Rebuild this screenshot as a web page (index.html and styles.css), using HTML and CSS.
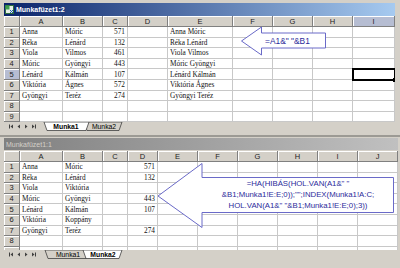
FILE: index.html
```html
<!DOCTYPE html>
<html lang="hu">
<head>
  <meta charset="UTF-8" />
  <title>Munkafüzet</title>
  <link rel="stylesheet" href="styles.css">
</head>
<body>
  <div class="desk">
    <div class="win win1">
      <div class="title active">
        <svg class="xl" width="9" height="9" viewBox="0 0 9 9">
          <rect x="0.5" y="0.5" width="8" height="8" fill="#e8f0e8" stroke="#2f6f3f"/>
          <rect x="0.5" y="0.5" width="4" height="4" fill="#3f9f4f"/>
          <path d="M5 5 L8 8 M8 5 L5 8" stroke="#1f5faf" stroke-width="1"/>
        </svg>
        <span>Munkafüzet1:2</span>
      </div>
      <div class="sheet s1" id="sheet1"></div>
      <div class="tabbar">
        <svg width="396" height="9" viewBox="0 0 396 9">
          <g class="nav">
            <rect x="5" y="2.5" width="1" height="4"/><path d="M9 2.5 L6.5 4.5 L9 6.5Z"/>
            <path d="M16 2.5 L13.5 4.5 L16 6.5Z"/>
            <path d="M21 2.5 L23.5 4.5 L21 6.5Z"/>
            <path d="M28 2.5 L30.5 4.5 L28 6.5Z"/><rect x="31" y="2.5" width="1" height="4"/>
          </g>
          <polygon class="tab" points="80,0 83,8.5 115,8.5 118,0"/>
          <text class="tabtxt" x="100" y="7">Munka2</text>
          <polygon class="tab on" points="40,0 43,8.5 82,8.5 85,0"/>
          <text class="tabtxt b" x="62" y="7">Munka1</text>
        </svg>
      </div>
    </div>

    <div class="win win2">
      <div class="title">
        <span>Munkafüzet1:1</span>
      </div>
      <div class="sheet s2" id="sheet2"></div>
      <div class="tabbar">
        <svg width="396" height="9" viewBox="0 0 396 9">
          <g class="nav">
            <rect x="5" y="2.5" width="1" height="4"/><path d="M9 2.5 L6.5 4.5 L9 6.5Z"/>
            <path d="M16 2.5 L13.5 4.5 L16 6.5Z"/>
            <path d="M21 2.5 L23.5 4.5 L21 6.5Z"/>
            <path d="M28 2.5 L30.5 4.5 L28 6.5Z"/><rect x="31" y="2.5" width="1" height="4"/>
          </g>
          <polygon class="tab" points="41,0 44,8.5 82,8.5 85,0"/>
          <text class="tabtxt" x="64" y="7">Munka1</text>
          <polygon class="tab on" points="79,0 82,8.5 115,8.5 118,0"/>
          <text class="tabtxt b" x="99" y="7">Munka2</text>
        </svg>
      </div>
    </div>

    <!-- callouts -->
    <div class="callout c1">
      <svg width="88" height="31" viewBox="0 0 88 31">
        <polygon points="1.5,15 21.5,1 21.5,7 85.5,7 85.5,22 21.5,22 21.5,29" />
      </svg>
      <div class="ctext">=A1&amp;" "&amp;B1</div>
    </div>
    <div class="callout c2">
      <svg width="240" height="68" viewBox="0 0 240 68">
        <polygon points="2,34 46,1.5 46,15.5 237.5,15.5 237.5,50.5 46,50.5 46,65.5" />
      </svg>
      <div class="ctext">=HA(HIBÁS(HOL.VAN(A1&amp;" "<br>&amp;B1;Munka1!E:E;0));"";INDEX(Munka1!A:C;<br>HOL.VAN(A1&amp;" "&amp;B1;Munka1!E:E;0);3))</div>
    </div>
  </div>

  <script>
    // rows past `labelled` get an empty header (they are cut off by the tab bar)
    function build(id, cols, data, rows, labelled, sel) {
      const el = document.getElementById(id);
      let html = '<div class="hd corner"></div>';
      cols.forEach(c => {
        html += `<div class="hd${sel && sel.col === c ? ' hl' : ''}">${c}</div>`;
      });
      for (let r = 0; r < rows; r++) {
        const row = data[r] || [];
        const label = r < labelled ? r + 1 : '';
        html += `<div class="hd rn${sel && sel.row === r + 1 ? ' hl' : ''}">${label}</div>`;
        cols.forEach((c, i) => {
          const v = row[i] || '';
          let cls = 'cell';
          if (/^\d+$/.test(v)) cls += ' num';
          if (sel && sel.col === c && sel.row === r + 1) cls += ' sel';
          html += `<div class="${cls}">${v}</div>`;
        });
      }
      el.innerHTML = html;
    }

    build('sheet1', ['A','B','C','D','E','F','G','H','I'], [
      ['Anna', 'Móric', '571', '', 'Anna Móric'],
      ['Réka', 'Lénárd', '132', '', 'Réka Lénárd'],
      ['Viola', 'Vilmos', '461', '', 'Viola Vilmos'],
      ['Móric', 'Gyöngyi', '443', '', 'Móric Gyöngyi'],
      ['Lénárd', 'Kálmán', '107', '', 'Lénárd Kálmán'],
      ['Viktória', 'Ágnes', '572', '', 'Viktória Ágnes'],
      ['Gyöngyi', 'Teréz', '274', '', 'Gyöngyi Teréz']
    ], 9, 9, { col: 'I', row: 5 });

    build('sheet2', ['A','B','C','D','E','F','G','H','I','J'], [
      ['Anna', 'Móric', '', '571'],
      ['Réka', 'Lénárd', '', '132'],
      ['Viola', 'Viktória', '', ''],
      ['Móric', 'Gyöngyi', '', '443'],
      ['Lénárd', 'Kálmán', '', '107'],
      ['Viktória', 'Koppány', '', ''],
      ['Gyöngyi', 'Teréz', '', '274']
    ], 9, 8);
  </script>
</body>
</html>
```

FILE: styles.css
```css
body {
  margin: 0;
  background: #d4d0c8;
  font-family: 'Liberation Sans', Arial, sans-serif;
  overflow: hidden;
}

.desk {
  position: relative;
  width: 400px;
  height: 268px;
  overflow: hidden;
}

.win {
  background: #d4d0c8;
  box-sizing: border-box;
  padding-left: 4px;
}

.win1 {
  height: 137px;
  padding-top: 3px;
  padding-right: 5px;
  border-bottom: 2px solid #9c9a94;
}

.win2 {
  height: 131px;
  padding-top: 1px;
  padding-right: 2px;
}

.title {
  height: 13px;
  display: flex;
  align-items: center;
  gap: 2px;
  padding-left: 1px;
  font-size: 7px;
  font-weight: bold;
  color: #d4d0c8;
  background: linear-gradient(to right, #808080, #c0c0c0);
  margin-bottom: 1px;
}

.title.active {
  color: #fff;
  background: linear-gradient(to right, #0a246a, #a6caf0);
  margin-bottom: 0;
}

.win2 .title {
  height: 12px;
  font-weight: normal;
  padding-left: 2px;
}

.xl {
  flex: none;
}

.sheet {
  display: grid;
  grid-template-rows: 11px;
  grid-auto-rows: 10.6px;
  overflow: hidden;
  background: #fff;
}

.s1 {
  height: 106px;
  grid-template-columns: 16px 43px 40px 25px 40px 65px 40px 40px 40px 42px;
}

.s2 {
  height: 99px;
  grid-template-columns: 16px 43px 40px 25px 30px 40px 40px 40px 40px 40px 40px;
}

.hd {
  background: #d4d0c8;
  border-right: 1px solid #808080;
  border-bottom: 1px solid #808080;
  box-shadow: inset 1px 1px 0 #fff;
  font-size: 7.5px;
  color: #222;
  display: flex;
  align-items: center;
  justify-content: center;
  box-sizing: border-box;
}

.hd.hl {
  background: #b6bdd2;
}

.cell {
  border-right: 1px solid #c8c8c8;
  border-bottom: 1px solid #c8c8c8;
  box-sizing: border-box;
  font-family: 'Liberation Serif', 'Times New Roman', serif;
  font-size: 7.3px;
  color: #111;
  padding: 0 2px;
  display: flex;
  align-items: center;
  white-space: nowrap;
  overflow: visible;
}

.cell.num {
  justify-content: flex-end;
}

.cell.sel {
  position: relative;
  outline: 2px solid #000;
  outline-offset: -1px;
}

.cell.sel::after {
  content: "";
  position: absolute;
  right: -3px;
  bottom: -3px;
  width: 4px;
  height: 4px;
  background: #000;
}

.tabbar {
  height: 9px;
  background: #d4d0c8;
}

.tabbar svg {
  display: block;
}

.nav {
  fill: #404040;
}

.tab {
  fill: #d4d0c8;
  stroke: #404040;
  stroke-width: 0.8;
}

.tab.on {
  fill: #fff;
}

.tabtxt {
  font-family: 'Liberation Sans', Arial, sans-serif;
  font-size: 6.8px;
  text-anchor: middle;
  fill: #000;
}

.tabtxt.b {
  font-weight: bold;
}

.callout {
  position: absolute;
}

.callout svg {
  position: absolute;
  left: 0;
  top: 0;
}

.callout polygon {
  fill: #fff;
  stroke: #6a6ac8;
  stroke-width: 1;
}

.ctext {
  position: absolute;
  color: #2b2b9a;
  font-family: 'Liberation Sans', Arial, sans-serif;
  white-space: nowrap;
}

.c1 {
  left: 240px;
  top: 26px;
  width: 88px;
  height: 31px;
}

.c1 .ctext {
  left: 25px;
  top: 10px;
  font-size: 8.4px;
  line-height: 10px;
}

.c2 {
  left: 156px;
  top: 162px;
  width: 240px;
  height: 68px;
}

.c2 .ctext {
  left: 46px;
  width: 192px;
  top: 16px;
  font-size: 7.8px;
  line-height: 11px;
  text-align: center;
}
```
